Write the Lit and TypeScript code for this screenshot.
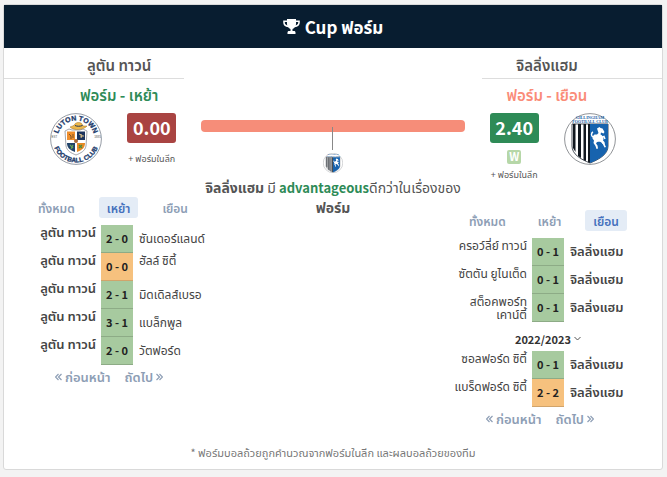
import { LitElement, html, svg, css, nothing } from "lit";
import { customElement, property } from "lit/decorators.js";
import { classMap } from "lit/directives/class-map.js";

type Match = { home: string; score: string; away: string; draw?: boolean };
type Season = { name?: string; matches: Match[] };

const LUTON = "ลูตัน ทาวน์";
const GILLS = "จิลลิ่งแฮม";

const homeSeasons: Season[] = [
  {
    matches: [
      { home: LUTON, score: "2 - 0", away: "ซันเดอร์แลนด์" },
      { home: LUTON, score: "0 - 0", away: "ฮัลล์ ซิตี้", draw: true },
      { home: LUTON, score: "2 - 1", away: "มิดเดิลส์เบรอ" },
      { home: LUTON, score: "3 - 1", away: "แบล็กพูล" },
      { home: LUTON, score: "2 - 0", away: "วัตฟอร์ด" },
    ],
  },
];

const awaySeasons: Season[] = [
  {
    matches: [
      { home: "ครอว์ลี่ย์ ทาวน์", score: "0 - 1", away: GILLS },
      { home: "ซัตตัน ยูไนเต็ด", score: "0 - 1", away: GILLS },
      { home: "สต็อคพอร์ท\nเคาน์ตี้", score: "0 - 1", away: GILLS },
    ],
  },
  {
    name: "2022/2023",
    matches: [
      { home: "ซอลฟอร์ด ซิตี้", score: "0 - 1", away: GILLS },
      { home: "แบร็ดฟอร์ด ซิตี้", score: "2 - 2", away: GILLS, draw: true },
    ],
  },
];

const lutonCrest = svg`
  <defs>
    <path id="arc-top" d="M7.500 26A18.500 18.500 0 0 1 44.500 26" />
    <path id="arc-bottom" d="M2.500 26A23.500 23.500 0 0 0 49.500 26" />
  </defs>
  <circle cx="26" cy="26" r="25.400" fill="#fff" stroke="#8b929c" stroke-width=".9" />
  <g font-family="Liberation Sans Narrow, Liberation Sans" font-weight="700" font-size="7" fill="#1b3a6b" stroke="#1b3a6b" stroke-width=".3" text-anchor="middle">
    <text><textPath href="#arc-top" startOffset="50%">LUTON TOWN</textPath></text>
    <text font-size="6.500"><textPath href="#arc-bottom" startOffset="50%">FOOTBALL CLUB</textPath></text>
  </g>
  <g font-family="Liberation Sans" font-size="3" fill="#555" text-anchor="middle">
    <text x="4.500" y="25">EST</text><text x="47.500" y="25">1885</text>
  </g>
  <path d="M15 18l4-2 3 1h8l3-1 4 2-1 15c-1 5-5 7-10 9-5-2-9-4-10-9z" fill="#fff" stroke="#8c9099" stroke-width=".8" />
  <path d="M17 18.500h8v8.500h-8z" fill="#ef8e2c" /><path d="M27 18.500h8v8.500h-8z" fill="#1d355e" />
  <path d="M17 30h8v9c-5-2-8-4-8-9z" fill="#20436a" /><path d="M27 30h8c0 5-3 7-8 9z" fill="#e68a25" />
  <path d="M19 21l2 2v3m2-5v4" stroke="#7d5529" stroke-width="1" fill="none" />
  <path d="M29 21l3 1-1 3m-1-2h4" stroke="#d9c08a" stroke-width="1" fill="none" />
  <path d="M20 32l3 3m0-3l-2 4" stroke="#63a15b" stroke-width="1.200" fill="none" />
  <path d="M29 35l3-3m-3 0l3 3" stroke="#4e8b3e" stroke-width="1.200" fill="none" />
  <circle cx="26" cy="28" r="2" fill="#a56939" />
  <path d="M20 14c2-1 4-1 5-3 1-2 6-2 7 0l1 2h4c-3 4-13 5-17 1z" fill="#edb84b" stroke="#9e7028" stroke-width=".5" />
  <path d="M25 12.500c2 1 5 1 7.500 0" stroke="#1d355e" stroke-width="1" fill="none" />`;

const gillinghamCrest = svg`
  <circle cx="26" cy="26" r="25.400" fill="#fff" stroke="#85888c" stroke-width=".9" />
  <g font-family="Liberation Serif" font-weight="700" font-size="4.200" fill="#1c62a6" text-anchor="middle">
    <text x="26" y="6">GILLINGHAM</text><text x="26" y="9.800">FOOTBALL CLUB</text>
  </g>
  <path d="M8 11h36v22c0 8-8 13-18 17C16 46 8 41 8 33z" fill="#fff" stroke="#1c2530" stroke-width=".8" />
  <path d="M9 11h2.500v28L9 35zM14 11h3v34l-3-2zM19.500 11h2.500v37l-2.500-1zM24 11h2v39l-2-1z" fill="#111820" />
  <path d="M26 11h18v22c0 8-8 13-18 17z" fill="#1763ae" />
  <path d="M33 15.500l2.500-1.500 1 1 2 .5 2 3.500-1 1.500-2.500-1-.5 2c2 1 3 2.500 3 4.500l-.5 2 1.500 1 .5 3 1 2-1.500.5-2-4-2.500-2-3 .5-1 1.500 1.500 2 .5 3-1.500.5-1-3-2-3 .5-2.500-1.500-2 .5-2.500 1.500-1.500 2.500 0 1.500-1.500z" fill="#fff" />
  <path d="M29 24c-2-1-2-4 0-5M36 25l4-1.500 1 2.500M35 27.500l4 1 0 2.500" stroke="#fff" stroke-width="1.400" fill="none" />`;

@customElement("match-history")
export class MatchHistory extends LitElement {
  @property({ attribute: false }) seasons: Season[] = [];
  @property() side: "home" | "away" = "home";

  static styles = css`
    :host {
      display: block;
    }
    button {
      border: 0;
      background: none;
      padding: 0;
      margin: 0;
      font: inherit;
      color: inherit;
      cursor: pointer;
    }
    .tabs {
      display: flex;
      justify-content: center;
      gap: 16px;
      padding-right: 8px;
      margin-bottom: 7px;
    }
    .tab {
      padding: 0 8px;
      height: 21px;
      border-radius: 3px;
      font-size: 12px;
      line-height: 20px;
      font-weight: 600;
      color: #8d9eb5;
    }
    .tab.active {
      background: #e4ecf6;
      color: #4571bd;
    }
    table {
      width: 100%;
      table-layout: fixed;
      border-spacing: 0;
      line-height: 13px;
      font-size: 12px;
      color: #444;
    }
    td {
      box-sizing: border-box;
      height: 28px;
      padding: 0;
      vertical-align: top;
    }
    .team-home {
      text-align: right;
      padding: 0 5px 0 16px;
      white-space: pre-line;
    }
    .team-away {
      padding: 0 0 4px 6px;
      vertical-align: middle;
      white-space: nowrap;
    }
    .team-away.level {
      vertical-align: top;
    }
    .own {
      font-size: 13px;
      font-weight: 600;
    }
    .score-col {
      width: 32px;
    }
    .score {
      background: #a7ca9f;
      border-bottom: 1px solid #8dab86;
      text-align: center;
      vertical-align: middle;
      font-size: 11px;
      font-weight: 700;
      color: #222;
    }
    .score.draw {
      background: #f6c17e;
      border-bottom-color: #d1a46b;
    }
    .season {
      display: flex;
      align-items: center;
      justify-content: center;
      gap: 3px;
      width: 100%;
      height: 29px;
      padding-top: 4px;
      font-size: 11px;
      font-weight: 700;
      color: #333;
    }
    .pager {
      display: flex;
      justify-content: center;
      gap: 14px;
      padding-right: 16px;
      font-size: 13px;
      line-height: 23px;
      font-weight: 600;
      color: #8d9eb5;
    }
    .pager button {
      display: flex;
      align-items: center;
      gap: 3px;
    }
  `;

  private row(m: Match) {
    const home = this.side === "home";
    return html`<tr>
      <td class=${classMap({ "team-home": true, own: home })}>${m.home}</td>
      <td class=${classMap({ score: true, draw: !!m.draw })}>${m.score}</td>
      <td class=${classMap({ "team-away": true, own: !home, level: home && !!m.draw })}>${m.away}</td>
    </tr>`;
  }

  render() {
    return html`
      <div class="tabs">
        <button class="tab">ทั้งหมด</button>
        <button class=${classMap({ tab: true, active: this.side === "home" })}>เหย้า</button>
        <button class=${classMap({ tab: true, active: this.side === "away" })}>เยือน</button>
      </div>
      ${this.seasons.map(
        (s) => html`
          ${s.name
            ? html`<button class="season">
                ${s.name}
                <svg width="7" height="5" viewBox="0 0 7 5" fill="none" stroke="#555"><path d="M.5 1l3 3 3-3" /></svg>
              </button>`
            : nothing}
          <table>
            <colgroup><col /><col class="score-col" /><col /></colgroup>
            <tbody>${s.matches.map((m) => this.row(m))}</tbody>
          </table>
        `
      )}
      <div class="pager">
        <button>
          <svg width="7" height="8" viewBox="0 0 7 8" fill="none" stroke="currentColor" stroke-width="1.200"><path d="M3.500 1l-3 3 3 3M6.500 1l-3 3 3 3" /></svg>
          ก่อนหน้า
        </button>
        <button>
          ถัดไป
          <svg width="7" height="8" viewBox="0 0 7 8" fill="none" stroke="currentColor" stroke-width="1.200"><path d="M.5 1l3 3-3 3M3.500 1l3 3-3 3" /></svg>
        </button>
      </div>
    `;
  }
}

@customElement("app-root")
export class AppRoot extends LitElement {
  static styles = css`
    :host {
      display: block;
      box-sizing: border-box;
      min-height: 100vh;
      padding: 4px 4px 7px 3px;
      background: #f3f3f3;
      color: #555;
      font-family: "Noto Sans CJK SC", "Noto Sans Thai", sans-serif;
    }
    .card {
      background: #fff;
      border: 1px solid #d9d9d9;
      border-radius: 3px;
    }
    .head {
      display: flex;
      align-items: center;
      justify-content: center;
      gap: 5px;
      height: 43px;
      margin: 0;
      background: #081d30;
      color: #fff;
      font-size: 17px;
      line-height: 24px;
      font-weight: 700;
    }
    .columns {
      display: grid;
      grid-template-columns: 20fr 33fr 20fr;
    }
    .team {
      display: flex;
      flex-direction: column;
      min-width: 0;
    }
    .name,
    .form {
      margin: 0;
      text-align: center;
      font-size: 15px;
      font-weight: 600;
    }
    .name {
      padding-top: 8px;
      height: 22px;
      line-height: 18px;
      border-bottom: 1px solid #ddd;
    }
    .form {
      height: 34px;
      line-height: 32px;
    }
    .home .name,
    .home .form {
      padding-left: 50px;
    }
    .away .name,
    .away .form {
      padding-right: 50px;
    }
    .home .form,
    .strong {
      color: #2e8b57;
    }
    .away .form {
      color: #fa8c78;
    }
    .summary {
      display: flex;
      gap: 25px;
      padding: 0 8px;
    }
    .home .summary {
      justify-content: flex-end;
    }
    .crest {
      width: 52px;
      height: 52px;
      flex: none;
    }
    .rating {
      display: flex;
      flex-direction: column;
      align-items: center;
      width: 49px;
    }
    .points {
      width: 49px;
      height: 30px;
      border-radius: 3px;
      background: #a94442;
      color: #fff;
      text-align: center;
      font-size: 18px;
      line-height: 28px;
      font-weight: 700;
    }
    .away .points {
      background: #2e8b57;
    }
    .win {
      width: 14px;
      height: 14px;
      margin-top: 7px;
      border-radius: 2px;
      background: #b6d7a8;
      color: #fff;
      text-align: center;
      font-size: 11px;
      line-height: 13px;
      font-weight: 700;
    }
    .league {
      margin-top: 8px;
      font-size: 9px;
      line-height: 14px;
      white-space: nowrap;
    }
    .home .league {
      margin-top: 9px;
    }
    .away .league {
      margin-top: 4px;
    }
    match-history {
      width: 226px;
      margin-top: 31px;
    }
    .away match-history {
      width: 228px;
      align-self: flex-end;
      margin-top: 28px;
    }
    .compare {
      display: flex;
      flex-direction: column;
      align-items: center;
      padding: 72px 17px 0;
    }
    .bar {
      width: 100%;
      height: 12px;
      border-radius: 4px;
      background: #f68d79;
    }
    .tick {
      width: 1px;
      height: 23px;
      margin: -5px 0 3px;
      background: #888;
    }
    .mini {
      width: 20px;
      height: 20px;
    }
    .verdict {
      margin: 4px 0 0;
      text-align: center;
      font-size: 14px;
      line-height: 20px;
    }
    .strong {
      font-size: 13px;
      line-height: 16px;
    }
    .note {
      margin: 0;
      padding: 14px 0 8px;
      text-align: center;
      font-size: 11px;
      line-height: 17px;
      color: #777;
    }
  `;

  render() {
    return html`
      <section class="card">
        <h2 class="head">
          <svg width="17" height="15" viewBox="0 0 17 15" fill="#fff">
            <path d="M4 0h9v5c0 2.500-1.500 4-3.500 5v2h1.500c1 0 1.500.6 1.500 1.500V15h-8v-1.500c0-.9.500-1.500 1.500-1.500h1.500v-2C5.500 9 4 7.500 4 5z" />
            <path d="M4.500 2.300H1V3.500c0 2 1.500 3.500 4.500 4M12.500 2.300H16V3.500c0 2-1.500 3.500-4.500 4" fill="none" stroke="#fff" stroke-width="1.600" />
          </svg>
          <span>Cup ฟอร์ม</span>
        </h2>
        <div class="columns">
          <div class="team home">
            <h3 class="name">${LUTON}</h3>
            <p class="form">ฟอร์ม - เหย้า</p>
            <div class="summary">
              <svg class="crest" viewBox="0 0 52 52" role="img">${lutonCrest}</svg>
              <div class="rating">
                <div class="points">0.00</div>
                <div class="league">+ ฟอร์มในลีก</div>
              </div>
            </div>
            <match-history side="home" .seasons=${homeSeasons}></match-history>
          </div>
          <div class="compare">
            <div class="bar"></div>
            <div class="tick"></div>
            <svg class="mini" viewBox="0 0 52 52" role="img">${gillinghamCrest}</svg>
            <p class="verdict"><b>${GILLS}</b> มี <b class="strong">advantageous</b>ดีกว่าในเรื่องของ<b>ฟอร์ม</b></p>
          </div>
          <div class="team away">
            <h3 class="name">${GILLS}</h3>
            <p class="form">ฟอร์ม - เยือน</p>
            <div class="summary">
              <div class="rating">
                <div class="points">2.40</div>
                <div class="win">W</div>
                <div class="league">+ ฟอร์มในลีก</div>
              </div>
              <svg class="crest" viewBox="0 0 52 52" role="img">${gillinghamCrest}</svg>
            </div>
            <match-history side="away" .seasons=${awaySeasons}></match-history>
          </div>
        </div>
        <p class="note">* ฟอร์มบอลถ้วยถูกคำนวณจากฟอร์มในลีก และผลบอลถ้วยของทีม</p>
      </section>
    `;
  }
}
